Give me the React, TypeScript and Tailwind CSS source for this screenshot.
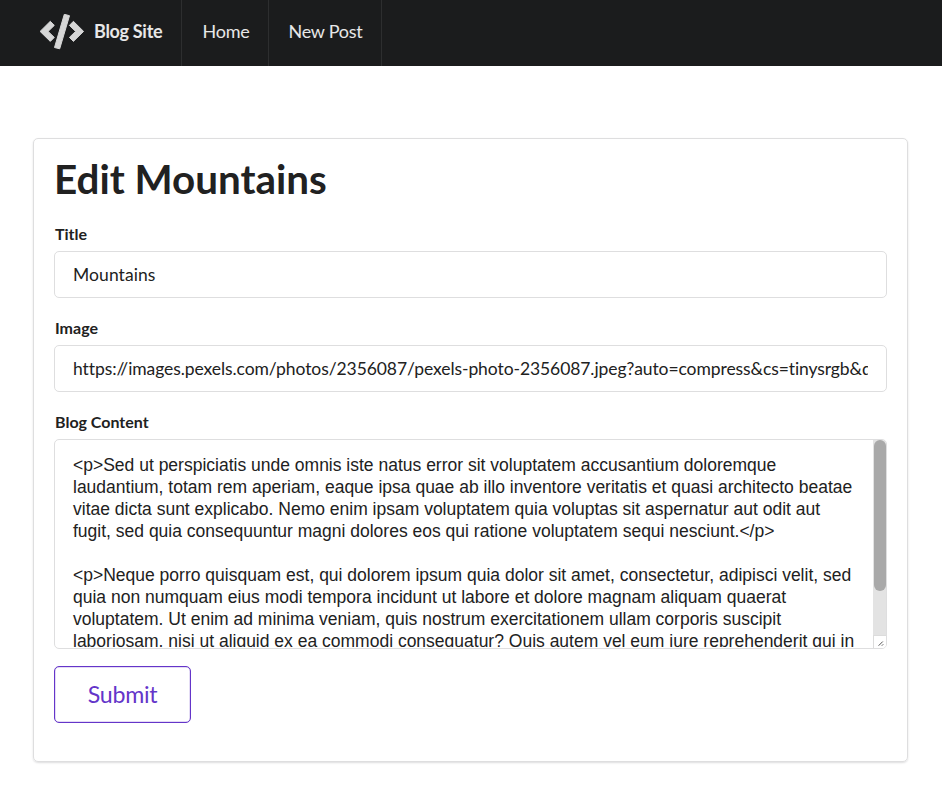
import React from "react";

const content = `<p>Sed ut perspiciatis unde omnis iste natus error sit voluptatem accusantium doloremque
laudantium, totam rem aperiam, eaque ipsa quae ab illo inventore veritatis et quasi architecto beatae
vitae dicta sunt explicabo. Nemo enim ipsam voluptatem quia voluptas sit aspernatur aut odit aut
fugit, sed quia consequuntur magni dolores eos qui ratione voluptatem sequi nesciunt.</p>

<p>Neque porro quisquam est, qui dolorem ipsum quia dolor sit amet, consectetur, adipisci velit, sed
quia non numquam eius modi tempora incidunt ut labore et dolore magnam aliquam quaerat
voluptatem. Ut enim ad minima veniam, quis nostrum exercitationem ullam corporis suscipit
laboriosam, nisi ut aliquid ex ea commodi consequatur? Quis autem vel eum iure reprehenderit qui in`;

const image =
  "https://images.pexels.com/photos/2356087/pexels-photo-2356087.jpeg?auto=compress&cs=tinysrgb&d";

function Label({ text }: { text: string }) {
  return <div className="mb-[5px] h-[24px] pl-px text-[16px] leading-[23px] font-bold">{text}</div>;
}

function Field({ label, value, spacing }: { label: string; value: string; spacing: string }) {
  return (
    <div className="mb-[18px]">
      <Label text={label} />
      <div className="h-[47px] rounded-[5px] border border-[#dededf] px-[18px]">
        <div className={`overflow-hidden text-[17.5px] leading-[46px] whitespace-nowrap ${spacing}`}>{value}</div>
      </div>
    </div>
  );
}

export default function App() {
  return (
    <div className="min-h-[785px] bg-white font-['Lato',sans-serif] text-[#212121]">
      <nav className="flex h-[66px] items-stretch bg-[#1b1c1d] text-[18px] tracking-[-0.25px] text-white/90">
        <div className="flex w-[182px] items-center border-r border-[#2d2e2f] pb-[3px] pl-[39px] font-bold">
          <svg width="46" height="36" viewBox="0 0 46 36" fill="#d6d6d6" stroke="#d6d6d6" strokeWidth="1" strokeLinejoin="round">
            <path d="M25.300 0.300L30.500 1.700L20.700 34.800L15.500 33.500Z" />
            <path d="M11.300 7.300L15.300 11.400L9.100 17.400L15.300 23.400L11.300 27.400L1.100 17.400Z" />
            <path d="M34.400 7.300L44.600 17.400L34.400 27.400L30.400 23.400L36.600 17.400L30.400 11.400Z" />
          </svg>
          <span className="ml-[9px] tracking-[-0.3px] whitespace-nowrap">Blog Site</span>
        </div>
        <div className="flex w-[87px] items-center justify-center border-r border-[#2d2e2f] pb-[3px] pl-[2px]">Home</div>
        <div className="flex w-[113px] items-center justify-center border-r border-[#2d2e2f] pb-[3px] pl-px">New Post</div>
      </nav>
      <main className="mt-[72px] ml-[33px] h-[624px] w-[875px] rounded-[5px] border border-[#dededf] px-[20px] pt-[14px] shadow-[0_1px_2px_rgba(34,36,38,0.15)]">
        <h1 className="mb-[17px] text-[40.4px] leading-[52px] font-bold">Edit Mountains</h1>
        <Field label="Title" value="Mountains" spacing="tracking-[0.08px]" />
        <Field label="Image" value={image} spacing="tracking-[-0.085px]" />
        <Label text="Blog Content" />
        <div className="relative h-[210px] overflow-hidden rounded-[5px] border border-[#dededf]">
          <div className="h-[207px] overflow-hidden pt-[14px] pl-[18px] font-['Liberation_Sans',Arial,sans-serif] text-[17.5px] leading-[22px] whitespace-pre">{content}</div>
          <div className="absolute top-0 right-0 h-[195px] w-[13px] bg-[#e3e3e3]">
            <div className="ml-px h-[151px] rounded-full bg-[#a9a9a9]" />
          </div>
          <svg className="absolute right-0 bottom-0 border-t border-l border-[#dcdcdc] bg-white" width="13" height="13" viewBox="0 0 13 13" stroke="#444">
            <path d="M5 10.500L9.500 6M8.500 10.500L10 9" />
          </svg>
        </div>
        <button className="mt-[17px] h-[57px] w-[137px] rounded-[5px] border border-[#6435c9] pb-px text-[23.2px] tracking-[-0.25px] text-[#6435c9] shadow-[inset_0_0_0_0.5px_#c9b8eb]">Submit</button>
      </main>
    </div>
  );
}
